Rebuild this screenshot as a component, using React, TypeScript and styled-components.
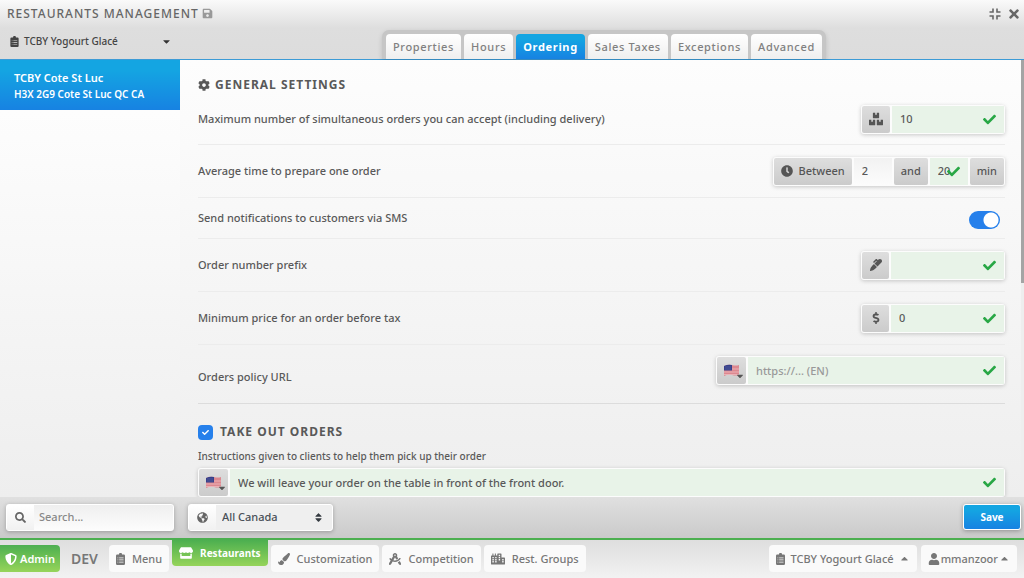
import React from "react";
import styled, { createGlobalStyle, css } from "styled-components";
import {
  FaBoxes,
  FaCaretDown,
  FaCaretUp,
  FaCheck,
  FaCity,
  FaClock,
  FaCog,
  FaDollarSign,
  FaDraftingCompass,
  FaGlobeAmericas,
  FaMarker,
  FaPaintBrush,
  FaSave,
  FaSearch,
  FaShieldAlt,
  FaSort,
  FaStore,
  FaTimes,
  FaUser,
} from "react-icons/fa";

const blue = "linear-gradient(#14a5e2 20%, #1782e2)";
const green = "linear-gradient(#4caf50, #96d45a)";
const grey = "linear-gradient(#dedede, #cbcbcb)";

const Global = createGlobalStyle`
  *, *::before, *::after { box-sizing: border-box; }
  html, body, #root { height: 100%; }
  body {
    margin: 0;
    overflow: hidden;
    font: 500 11px/18px "Noto Sans", "Open Sans", sans-serif;
    color: #595959;
  }
  button, input, select { font: inherit; color: inherit; margin: 0; }
  button { cursor: pointer; }
  svg { display: block; flex: none; }
`;

const Page = styled.div`
  display: flex;
  flex-direction: column;
  height: 100%;
  background: #eee;
`;

const Header = styled.header`
  flex: none;
  display: flex;
  flex-direction: column;
  background: linear-gradient(#fafafa, #dedede 28px, #dcdcdc);
  border-bottom: 1px solid #3c9bd6;
`;

const TitleBar = styled.div`
  display: flex;
  align-items: center;
  height: 27px;
  padding: 0 3px 0 7px;
`;

const Title = styled.h1`
  margin: 0 3px 0 0;
  font-size: 12px;
  font-weight: 500;
  letter-spacing: 1px;
  text-transform: uppercase;
  color: #666;
`;

const PlainButton = styled.button`
  display: flex;
  padding: 0;
  border: 0;
  background: none;
  color: #666;
`;

const WindowActions = styled.div`
  display: flex;
  align-items: center;
  gap: 6px;
  margin-left: auto;
`;

const NavRow = styled.div`
  display: flex;
  height: 32px;
`;

const OwnerButton = styled.button`
  display: flex;
  align-items: center;
  gap: 5px;
  width: 180px;
  height: 28px;
  padding: 0 8px 0 10px;
  border: 0;
  background: none;
  color: #444;
  font-size: 10px;

  svg:last-child { margin-left: auto; color: #333; }
`;

const TabStrip = styled.nav`
  display: flex;
  align-items: flex-end;
  gap: 3px;
  height: 29px;
  margin: 3px auto 0 202px;
  padding: 0 4px;
  border-radius: 7px 7px 0 0;
  background: #c6c6c6;
  box-shadow: 0 2px 5px rgba(0, 0, 0, 0.15);
`;

const Tab = styled.a<{ $active?: boolean }>`
  height: 25px;
  padding: 0 7px;
  border-radius: 4px 4px 0 0;
  line-height: 25px;
  letter-spacing: 0.06em;
  text-decoration: none;
  white-space: nowrap;
  color: ${(p) => (p.$active ? "#fff" : "#808080")};
  font-weight: ${(p) => (p.$active ? 700 : 500)};
  background: ${(p) => (p.$active ? blue : "linear-gradient(#fff, #efefef)")};
`;

const Body = styled.div`
  flex: 1;
  min-height: 0;
  display: flex;
`;

const Sidebar = styled.aside`
  flex: none;
  width: 180px;
  background: linear-gradient(#fff, #eee);
`;

const Location = styled.a`
  display: block;
  height: 50px;
  padding: 10px 14px 0;
  color: #fff;
  font-weight: 600;
  line-height: 16px;
  text-decoration: none;
  background: ${blue};

  small { display: block; font-size: 10px; }
`;

const Content = styled.main`
  flex: 1;
  min-width: 0;
  overflow: hidden;
  padding: 0 16px 0 18px;
  background: linear-gradient(#fdfdfd, #eee);
  border-right: 3px solid #e4e4e4;
  border-image: linear-gradient(#a4a4a4 51%, #eee 51%) 0 3 0 0;
`;

const SectionTitle = styled.h2`
  display: flex;
  align-items: center;
  gap: 5px;
  margin: 0;
  font-size: 12px;
  line-height: 18px;
  font-weight: 700;
  letter-spacing: 1px;
  text-transform: uppercase;
`;

const General = styled.section`
  padding-top: 16px;
  border-bottom: 1px solid #dcdcdc;
`;

const Row = styled.div<{ $height?: number }>`
  display: flex;
  align-items: center;
  justify-content: space-between;
  height: ${(p) => p.$height ?? 53}px;
  border-bottom: 1px solid #ececec;
`;

const LastRow = styled(Row)`
  height: 58px;
  padding-top: 11px;
  align-items: flex-start;
  border-bottom: 0;

  > label { padding-top: 12px; }
`;

const TakeOut = styled.section`
  padding-top: 19px;

  h2 { gap: 7px; }
`;

const Hint = styled.label`
  display: block;
  margin: 6px 0 3px;
  font-size: 10px;
`;

const Group = styled.div<{ $width?: number }>`
  flex: none;
  display: flex;
  gap: 2px;
  width: ${(p) => (p.$width ? `${p.$width}px` : "auto")};
  height: 29px;
  padding: 1px;
  border-radius: 3px;
  background: #fcfcfc;
  box-shadow: 0 1px 4px rgba(0, 0, 0, 0.2);
`;

const addon = css`
  flex: none;
  display: flex;
  align-items: center;
  justify-content: center;
  gap: 6px;
  min-width: 27px;
  padding: 0 7px;
  border: 0;
  border-radius: 2px;
  background: ${grey};
  color: #555;
`;

const Addon = styled.span`
  ${addon}
`;

const FlagButton = styled.button`
  ${addon}
  gap: 0;
  padding: 0 1px 0 7px;

  svg:last-child { align-self: flex-end; margin: 0 0 3px -5px; }
`;

const Field = styled.span<{ $valid?: boolean; $width?: number }>`
  flex: ${(p) => (p.$width ? "none" : "1")};
  width: ${(p) => (p.$width ? `${p.$width}px` : "auto")};
  min-width: 0;
  position: relative;
  display: flex;
  background: ${(p) => (p.$valid ? "#e8f3e8" : "linear-gradient(#f2f2f2, #fcfcfc)")};

  input {
    width: 100%;
    padding: 0 8px;
    border: 0;
    outline: 0;
    background: none;
  }
  input::placeholder { color: #999; opacity: 1; }
`;

const ValidMark = styled(FaCheck)`
  position: absolute;
  top: 7px;
  right: 8px;
  color: #28a745;
`;

const Switch = styled.input`
  && {
    appearance: none;
    width: 31px;
    height: 18px;
    margin: 4px 5px 0 0;
    border-radius: 9px;
    background: radial-gradient(circle at 22px 50%, #fff 7px, #2680eb 8px);
  }
`;

const TickBox = styled.span`
  position: relative;
  display: flex;

  input {
    appearance: none;
    width: 15px;
    height: 15px;
    border-radius: 4px;
    background: #2680eb;
  }
  svg { position: absolute; top: 4px; left: 4px; color: #fff; pointer-events: none; }
`;

const Toolbar = styled.div`
  flex: none;
  display: flex;
  align-items: center;
  gap: 14px;
  height: 41px;
  padding: 0 3px 1px 6px;
  background: linear-gradient(#e0e0e0, #cacaca);
`;

const SearchBox = styled.div`
  display: flex;
  width: 168px;
  height: 27px;
  border: 1px solid #fff;
  border-radius: 3px;
  background: linear-gradient(#efefef, #fcfcfc);
  box-shadow: 0 1px 4px rgba(0, 0, 0, 0.25);

  > label {
    display: flex;
    align-items: center;
    justify-content: center;
    width: 27px;
    flex: none;
    background: linear-gradient(#fff, #f1f1f1);
    color: #666;
  }
  input { flex: 1; min-width: 0; padding: 0 5px; border: 0; outline: 0; background: none; }
  input::placeholder { color: #888; opacity: 1; }
`;

const RegionBox = styled(SearchBox)`
  position: relative;
  width: 145px;
  background: #efefef;

  select {
    flex: 1;
    min-width: 0;
    appearance: none;
    padding: 0 6px;
    border: 0;
    outline: 0;
    background: none;
    color: #495057;
  }
  > svg { position: absolute; right: 8px; top: 7px; color: #343a40; pointer-events: none; }
`;

const SaveButton = styled.button`
  width: 58px;
  height: 26px;
  border: 1px solid #fff;
  border-radius: 3px;
  background: ${blue};
  box-shadow: 0 1px 4px rgba(0, 0, 0, 0.3);
  color: #fff;
  font-size: 10px;
  font-weight: 700;

  && { margin-left: auto; }
`;

const Footer = styled.footer`
  flex: none;
  display: flex;
  align-items: flex-start;
  gap: 3px;
  height: 40px;
  padding-right: 7px;
  border-top: 2px solid #4caf50;
  background: linear-gradient(#dedede, #f2f2f2);
`;

const FootLink = styled.a<{ $tone?: "admin" | "current" }>`
  display: flex;
  align-items: center;
  gap: 7px;
  height: 27px;
  margin-top: 5px;
  padding: 0 7px;
  border-radius: 4px;
  background: #fafafa;
  color: #777;
  text-decoration: none;
  white-space: nowrap;

  ${(p) => p.$tone && css`
    background: ${green};
    color: #fff;
    font-weight: 600;
  `}
  ${(p) => p.$tone === "admin" && css`
    gap: 3px;
    padding: 0 5px;
    border-radius: 0 4px 4px 0;
  `}
  ${(p) => p.$tone === "current" && css`
    height: 26px;
    margin-top: 0;
    border-radius: 0 0 4px 4px;
    font-size: 10px;
    font-weight: 700;
  `}
`;

const Env = styled.strong`
  margin: 5px 8px 0;
  font-size: 14px;
  line-height: 28px;
  font-weight: 600;
  color: #777;
`;

const FootButton = styled(FootLink).attrs({ as: "button" })`
  border: 0;
  gap: 5px;
`;

const AccountMenu = styled.div`
  display: flex;
  gap: 4px;
  margin-left: auto;

  button:last-child { gap: 1px; }
`;

const ClipboardIcon = ({ size = 12 }: { size?: number }) => (
  <svg width="9" height={size} viewBox="0 0 9 12" fill="currentColor" aria-hidden="true">
    <path
      fillRule="evenodd"
      d="M1.200 1.500H2.900A1.600 1.600 0 0 1 6.100 1.500H7.800A1.200 1.200 0 0 1 9 2.700V10.800A1.200 1.200 0 0 1 7.800 12H1.200A1.200 1.200 0 0 1 0 10.800V2.700A1.200 1.200 0 0 1 1.200 1.500ZM1.500 4.500V5.200H2.300V4.500ZM3.200 4.500V5.200H7.500V4.500ZM1.500 6.600V7.300H2.300V6.600ZM3.200 6.600V7.300H7.500V6.600ZM1.500 8.700V9.400H2.300V8.700ZM3.200 8.700V9.400H7.500V8.700Z"
    />
  </svg>
);

const FlagIcon = () => (
  <svg width="16" height="13" viewBox="0 0 16 13" aria-hidden="true">
    <path d="M0 2 Q4 0 8 1 T15 1 V11 Q12 12 8 11 T0 12Z" fill="#dd8890" />
    <path d="M0 5H15M0 8H15M0 10.500H15" stroke="#efc3c7" strokeWidth=".7" />
    <path d="M0 2 Q4 0 8 1 V6.500 H0Z" fill="#37408a" />
    <path d="M1.500 3H7M1.500 5H7" stroke="#7a80b5" strokeWidth=".7" strokeDasharray="1 1" />
  </svg>
);

const ExitFullScreenIcon = () => (
  <svg width="12" height="12" viewBox="0 0 12 12" fill="none" stroke="currentColor" strokeWidth="1.6" aria-hidden="true">
    <path d="M4 .5V4H.5M8 .5V4H11.500M.5 8H4V11.500M11.500 8H8V11.500" />
  </svg>
);

const tabs = ["Properties", "Hours", "Ordering", "Sales Taxes", "Exceptions", "Advanced"];

export default function App() {
  return (
    <Page>
      <Global />
      <Header>
        <TitleBar>
          <Title>Restaurants management</Title>
          <PlainButton aria-label="Save"><FaSave size={11} color="#999" /></PlainButton>
          <WindowActions>
            <PlainButton aria-label="Exit full screen"><ExitFullScreenIcon /></PlainButton>
            <PlainButton aria-label="Close"><FaTimes size={14} /></PlainButton>
          </WindowActions>
        </TitleBar>
        <NavRow>
          <OwnerButton>
            <ClipboardIcon size={11} />
            TCBY Yogourt Glacé
            <FaCaretDown size={11} />
          </OwnerButton>
          <TabStrip>
            {tabs.map((t) => (
              <Tab key={t} href="#" $active={t === "Ordering"}>{t}</Tab>
            ))}
          </TabStrip>
        </NavRow>
      </Header>

      <Body>
        <Sidebar>
          <Location href="#">
            TCBY Cote St Luc
            <small>H3X 2G9 Cote St Luc QC CA</small>
          </Location>
        </Sidebar>
        <Content>
          <General>
            <SectionTitle><FaCog size={12} />General settings</SectionTitle>
            <Row $height={51}>
              <label htmlFor="max">Maximum number of simultaneous orders you can accept (including delivery)</label>
              <Group $width={144}>
                <Addon><FaBoxes size={14} /></Addon>
                <Field $valid><input id="max" defaultValue="10" /><ValidMark size={13} /></Field>
              </Group>
            </Row>
            <Row>
              <label htmlFor="from">Average time to prepare one order</label>
              <Group>
                <Addon><FaClock size={12} />Between</Addon>
                <Field $width={38}><input id="from" defaultValue="2" /></Field>
                <Addon>and</Addon>
                <Field $valid $width={38}>
                  <input aria-label="Maximum minutes" defaultValue="20" /><ValidMark size={13} />
                </Field>
                <Addon>min</Addon>
              </Group>
            </Row>
            <Row $height={41}>
              <label htmlFor="sms">Send notifications to customers via SMS</label>
              <Switch id="sms" type="checkbox" role="switch" defaultChecked />
            </Row>
            <Row>
              <label htmlFor="prefix">Order number prefix</label>
              <Group $width={144}>
                <Addon><FaMarker size={12} /></Addon>
                <Field $valid><input id="prefix" /><ValidMark size={13} /></Field>
              </Group>
            </Row>
            <Row>
              <label htmlFor="min">Minimum price for an order before tax</label>
              <Group $width={144}>
                <Addon><FaDollarSign size={12} /></Addon>
                <Field $valid><input id="min" defaultValue="0" /><ValidMark size={13} /></Field>
              </Group>
            </Row>
            <LastRow>
              <label htmlFor="policy">Orders policy URL</label>
              <Group $width={289}>
                <FlagButton aria-label="Language"><FlagIcon /><FaCaretDown size={10} /></FlagButton>
                <Field $valid><input id="policy" placeholder="https://... (EN)" /><ValidMark size={13} /></Field>
              </Group>
            </LastRow>
          </General>
          <TakeOut>
            <SectionTitle>
              <TickBox><input id="takeout" type="checkbox" defaultChecked /><FaCheck size={7} /></TickBox>
              <label htmlFor="takeout">Take out orders</label>
            </SectionTitle>
            <Hint htmlFor="pickup">Instructions given to clients to help them pick up their order</Hint>
            <Group>
              <FlagButton aria-label="Language"><FlagIcon /><FaCaretDown size={10} /></FlagButton>
              <Field $valid>
                <input id="pickup" defaultValue="We will leave your order on the table in front of the front door." />
                <ValidMark size={13} />
              </Field>
            </Group>
          </TakeOut>
        </Content>
      </Body>

      <Toolbar>
        <SearchBox>
          <label htmlFor="search" aria-label="Search"><FaSearch size={11} /></label>
          <input id="search" placeholder="Search..." />
        </SearchBox>
        <RegionBox>
          <label htmlFor="region" aria-label="Region"><FaGlobeAmericas size={11} /></label>
          <select id="region"><option>All Canada</option></select>
          <FaSort size={11} />
        </RegionBox>
        <SaveButton>Save</SaveButton>
      </Toolbar>

      <Footer>
        <FootLink href="#" $tone="admin"><FaShieldAlt size={12} />Admin</FootLink>
        <Env>DEV</Env>
        <FootLink href="#"><ClipboardIcon />Menu</FootLink>
        <FootLink href="#" $tone="current"><FaStore size={14} />Restaurants</FootLink>
        <FootLink href="#"><FaPaintBrush size={12} />Customization</FootLink>
        <FootLink href="#"><FaDraftingCompass size={12} />Competition</FootLink>
        <FootLink href="#"><FaCity size={14} />Rest. Groups</FootLink>
        <AccountMenu>
          <FootButton><ClipboardIcon />TCBY Yogourt Glacé<FaCaretUp size={11} /></FootButton>
          <FootButton><FaUser size={12} />mmanzoor<FaCaretUp size={11} /></FootButton>
        </AccountMenu>
      </Footer>
    </Page>
  );
}
